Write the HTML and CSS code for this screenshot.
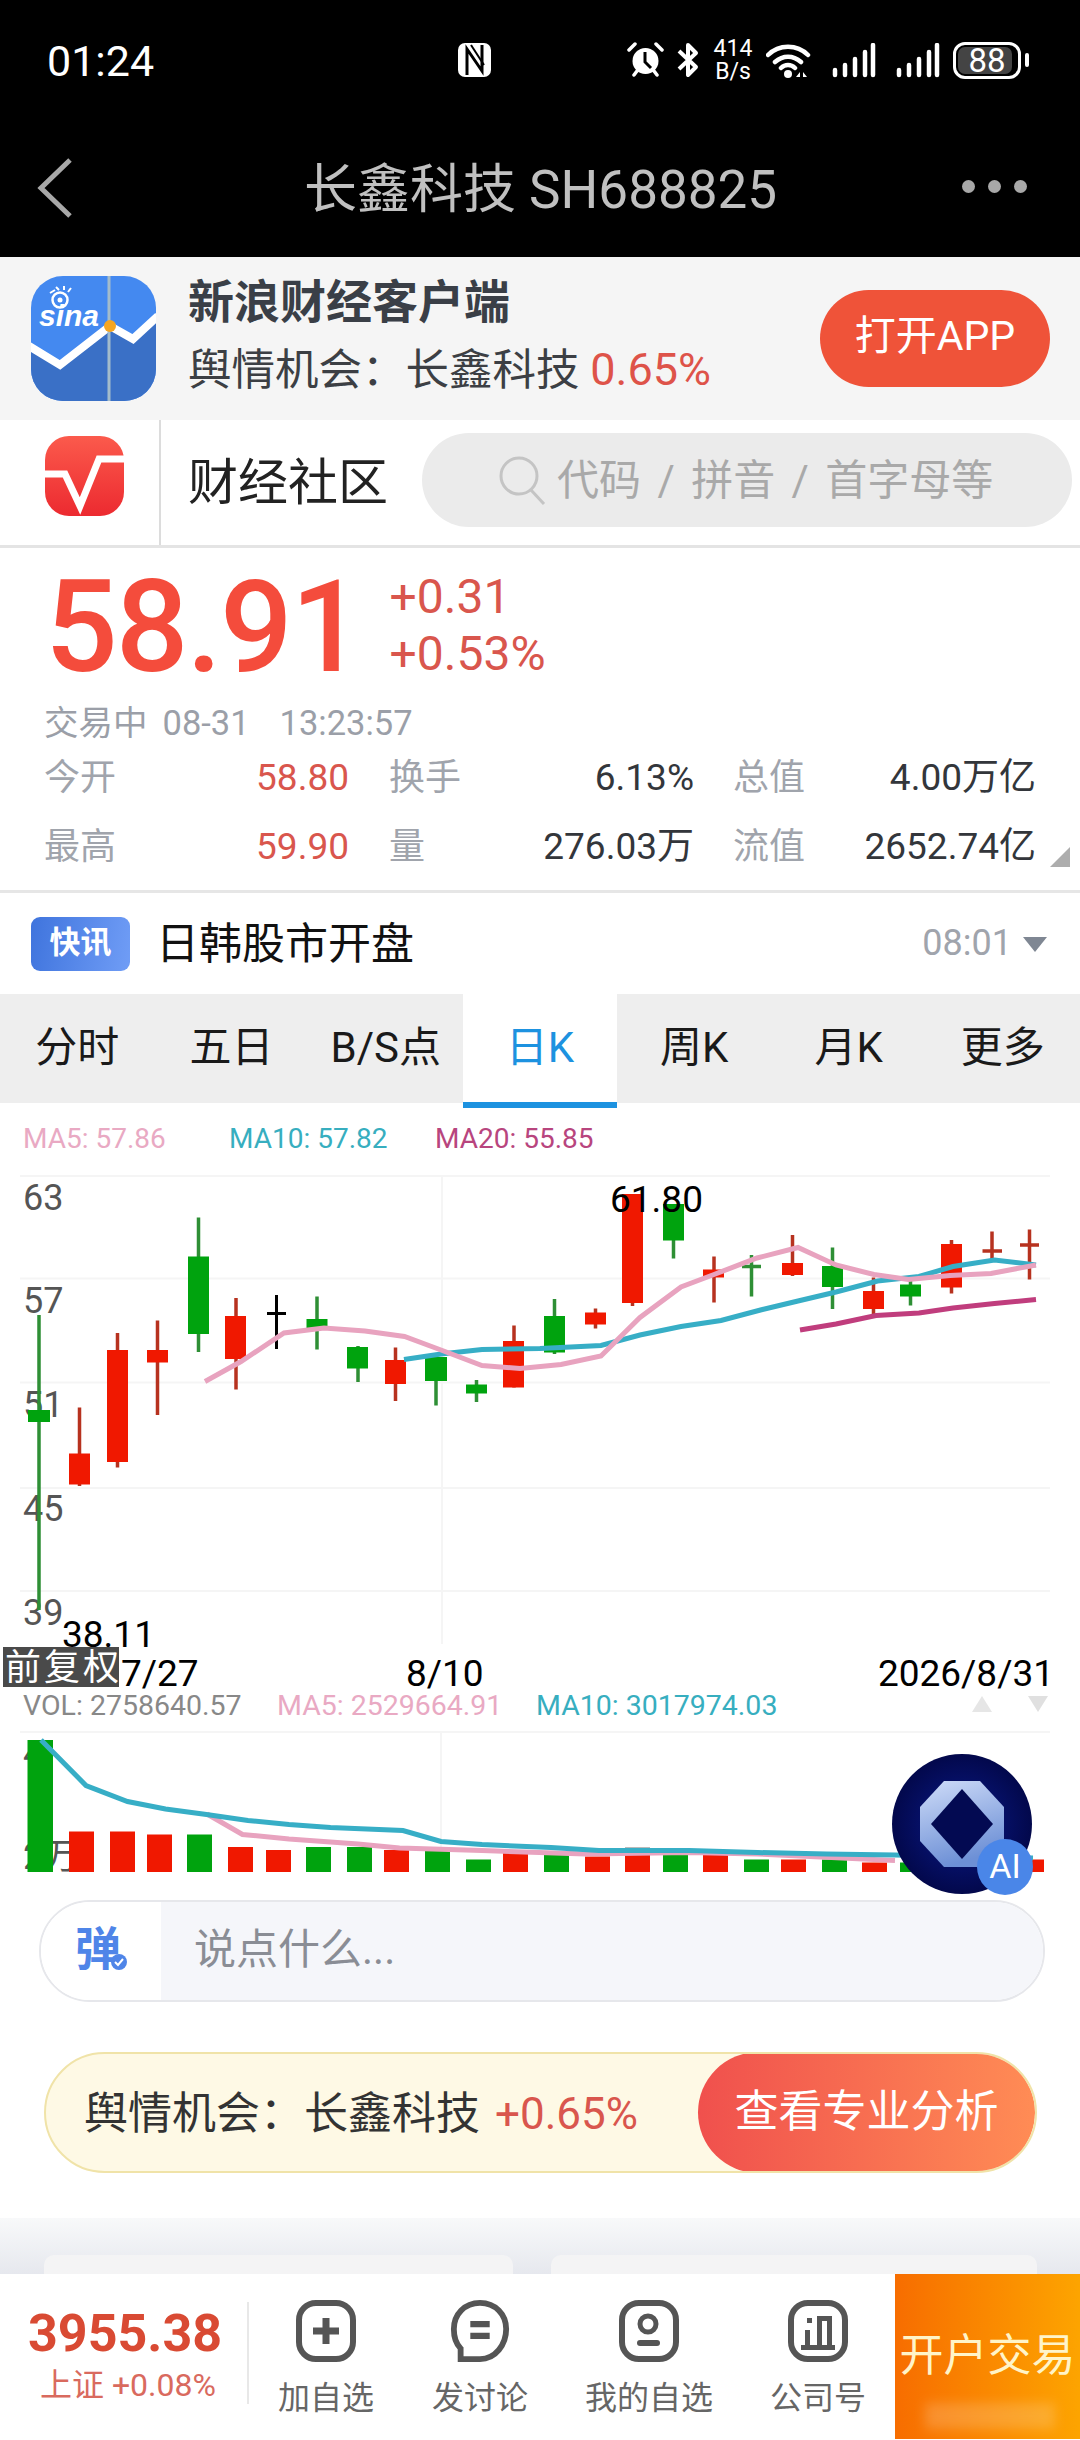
FILE: index.html
```html
<!DOCTYPE html>
<html>
<head>
<meta charset="UTF-8">
<title>长鑫科技 SH688825</title>
<link rel="stylesheet" href="styles.css">
</head>
<body>
<div id="wrap">

 <div class="topbar">
  <div class="status">
   <span class="clock">01:24</span>
   <svg class="ic_nfc" viewBox="0 0 33 34"><rect x="0" y="0" width="33" height="34" rx="7" fill="#fff"/><path d="M9 32V6L24 28V2" stroke="#000" stroke-width="3" fill="none"/><path d="M13 2L26 22" stroke="#000" stroke-width="2"/></svg>
   <div class="status_right">
    <svg class="ic_alarm" viewBox="0 0 37 36"><circle cx="18.500" cy="19" r="13" fill="#fff"/><path d="M18 10V20L24 26" stroke="#000" stroke-width="3" fill="none"/><path d="M2 8L8 2M35 8L29 2M7 33L10 29M30 33L27 29" stroke="#fff" stroke-width="3.500" stroke-linecap="round"/></svg>
    <svg class="ic_bt" viewBox="0 0 22 36"><path d="M2 9L19 25L11 33V3L19 11L2 27" stroke="#fff" stroke-width="4" fill="none" stroke-linejoin="round"/></svg>
    <div class="speed"><span>414</span><span>B/s</span></div>
    <svg class="ic_wifi" viewBox="0 0 46 35"><path d="M2 12C13 1 31 1 42 12M9 19C17 12 27 12 35 19M15 25C19 21 25 21 29 25" stroke="#fff" stroke-width="4.500" fill="none" stroke-linecap="round"/><circle cx="22" cy="31" r="4" fill="#fff"/><path d="M30 34L34 29V34ZM37 29L41 34H37Z" fill="#fff"/></svg>
    <svg class="ic_signal" viewBox="0 0 44 35"><path d="M3 27V32M13 22V32M23 16V32M33 9V32M41 2V32" stroke="#fff" stroke-width="4.500" stroke-linecap="round"/></svg>
    <svg class="ic_signal" viewBox="0 0 44 35"><path d="M3 27V32M13 22V32M23 16V32M33 9V32M41 2V32" stroke="#fff" stroke-width="4.500" stroke-linecap="round"/></svg>
    <div class="battery"><div class="battery_fill"></div><span>88</span></div>
    <div class="battery_tip"></div>
   </div>
  </div>
  <div class="nav">
   <svg class="ic_back" viewBox="0 0 36 60"><path d="M33 2L4 30L33 58" stroke="#a8a8a8" stroke-width="5" fill="none"/></svg>
   <div class="nav_title">长鑫科技 SH688825</div>
   <div class="nav_dots"><i></i><i></i><i></i></div>
  </div>
 </div>

 <div class="banner">
  <svg class="sina_icon" viewBox="0 0 125 125">
   <defs><clipPath id="sinaClip"><rect width="125" height="125" rx="32"/></clipPath></defs>
   <g clip-path="url(#sinaClip)">
    <rect width="125" height="125" fill="#4489f0"/>
    <path d="M0 71L29 89L79 50L102 63L125 41V125H0Z" fill="#3a70c6"/>
    <path d="M-2 70L29 89L79 50L102 63L127 40" stroke="#fff" stroke-width="8" fill="none"/>
    <path d="M78 0V125" stroke="#a3bccb" stroke-width="3"/>
    <circle cx="79" cy="50" r="6" fill="#f5a623"/>
    <circle cx="29" cy="24" r="7.500" fill="none" stroke="#fff" stroke-width="2.500"/>
    <circle cx="29" cy="24" r="2.500" fill="#fff"/>
    <path d="M19 17L24 14M25 11L28 14M33 10L33 14M40 12L37 16" stroke="#fff" stroke-width="2"/>
    <text class="sina_word" x="8" y="50">sina</text>
   </g>
  </svg>
  <div class="banner_text">
   <div class="banner_title">新浪财经客户端</div>
   <div class="banner_sub">舆情机会：长鑫科技 <span class="banner_pct">0.65%</span></div>
  </div>
  <div class="open_btn">打开APP</div>
 </div>

 <div class="search_row">
  <div class="logo_box">
   <svg class="v_logo" viewBox="0 0 79 80">
    <defs><linearGradient id="vGrad" x1="0" y1="0" x2="0" y2="1"><stop offset="0" stop-color="#fb5a4c"/><stop offset="1" stop-color="#ec2a30"/></linearGradient></defs>
    <rect width="79" height="80" rx="24" fill="url(#vGrad)"/>
    <path d="M0 38H20L35 70L54 23H79" stroke="#fff" stroke-width="7" fill="none"/>
   </svg>
  </div>
  <div class="community">财经社区</div>
  <div class="search_box">
   <svg class="ic_search" viewBox="0 0 48 50"><circle cx="21" cy="21" r="18" fill="none" stroke="#c4c4c4" stroke-width="3"/><path d="M33 35L46 49" stroke="#c4c4c4" stroke-width="3"/></svg>
   <span>代码 / 拼音 / 首字母等</span>
  </div>
 </div>

 <div class="quote">
  <div class="price_line">
   <div class="price">58.91</div>
   <div class="change">
    <div>+0.31</div>
    <div>+0.53%</div>
   </div>
  </div>
  <div class="trade_time"><span>交易中</span><span class="t_date">08-31</span><span class="t_clock">13:23:57</span></div>
  <div class="stats">
   <span class="lbl">今开</span><span class="val red_soft">58.80</span>
   <span class="lbl mid">换手</span><span class="val">6.13%</span>
   <span class="lbl last">总值</span><span class="val">4.00万亿</span>
   <span class="lbl">最高</span><span class="val red_soft">59.90</span>
   <span class="lbl mid">量</span><span class="val">276.03万</span>
   <span class="lbl last">流值</span><span class="val">2652.74亿</span>
  </div>
  <div class="corner"></div>
 </div>

 <div class="flash">
  <div class="flash_tag">快讯</div>
  <div class="flash_text">日韩股市开盘</div>
  <div class="flash_time">08:01</div>
  <div class="flash_arrow"></div>
 </div>

 <div class="tabs">
  <div class="tab">分时</div>
  <div class="tab">五日</div>
  <div class="tab">B/S点</div>
  <div class="tab active">日K</div>
  <div class="tab">周K</div>
  <div class="tab">月K</div>
  <div class="tab">更多</div>
 </div>

 <div class="chart_wrap">
  <svg class="chart" viewBox="0 1104 1080 797">
   <text class="legend pink" x="23" y="1149">MA5: 57.86</text>
   <text class="legend teal" x="229" y="1149">MA10: 57.82</text>
   <text class="legend rose" x="435" y="1149">MA20: 55.85</text>

   <path class="grid" d="M20 1177H1050M20 1279.500H1050M20 1383.500H1050M20 1489H1050M20 1592H1050M442 1177V1645"/>

   <text class="axis" x="23" y="1211">63</text>
   <text class="axis" x="23" y="1314">57</text>
   <text class="axis" x="23" y="1418">51</text>
   <text class="axis" x="23" y="1522">45</text>
   <text class="axis" x="23" y="1626">39</text>

   <!-- wicks -->
   <path class="wick_red" d="M79.500 1408.500V1487M117.500 1334V1468.500M157.500 1321.500V1416M236 1299V1390.500M395.500 1348.500V1402M514 1326.500V1388.500M595.500 1309.500V1329.500M632.500 1195V1307M714 1257.500V1303.500M792.500 1236V1277M873.500 1278.500V1316.500M951.500 1241V1294.500M992 1232.500V1261M982.500 1252H1002M1029.500 1230.500V1280.500M1020 1246H1039"/>
   <path class="wick_green" d="M39 1316V1611M198.500 1218.500V1353M317 1297.500V1350.500M358 1347V1383M436 1355V1406.500M476.500 1381V1403M554.500 1300V1355M673.500 1205V1259.500M751.500 1256V1297.500M742 1267.500H761M832.500 1248.500V1310M910.500 1282V1306.500"/>
   <path class="wick_black" d="M276.500 1296V1350M267 1314.500H286"/>

   <g class="body_red">
    <rect x="69" y="1454.500" width="21" height="31"/>
    <rect x="107" y="1351" width="21" height="112"/>
    <rect x="147" y="1351" width="21" height="12.500"/>
    <rect x="225" y="1317" width="21" height="43"/>
    <rect x="385" y="1361" width="21" height="24"/>
    <rect x="503" y="1342" width="21" height="46.500"/>
    <rect x="585" y="1313.500" width="21" height="12"/>
    <rect x="622" y="1195" width="21" height="109"/>
    <rect x="703" y="1270.500" width="21" height="8"/>
    <rect x="782" y="1264" width="21" height="12"/>
    <rect x="863" y="1292" width="21" height="18"/>
    <rect x="941" y="1245" width="21" height="43.500"/>
   </g>
   <g class="body_green">
    <rect x="28" y="1411" width="22" height="12"/>
    <rect x="188" y="1257.500" width="21" height="77.500"/>
    <rect x="306.500" y="1320" width="21" height="9"/>
    <rect x="347" y="1348" width="21" height="21.500"/>
    <rect x="425" y="1358" width="22" height="24"/>
    <rect x="466" y="1385.500" width="21" height="9"/>
    <rect x="544" y="1317" width="21" height="36.500"/>
    <rect x="663" y="1205" width="21" height="36.500"/>
    <rect x="822" y="1267" width="21" height="21"/>
    <rect x="900" y="1285.500" width="21" height="12"/>
   </g>

   <polyline class="line_rose" points="800,1331 836,1325 876,1316.500 919,1314 953,1309 994.500,1304.500 1036,1300.500"/>
   <polyline class="line_teal" points="404,1360.500 441,1355 482,1350.500 540,1349.500 601,1346.500 640,1336 681,1327.500 721,1321.500 760.500,1311 798,1302 836,1293 877.500,1282 919,1277.500 953,1267.500 994.500,1261 1036,1266"/>
   <polyline class="line_pink" points="205,1382.500 241,1362.500 284,1334 324,1329 365,1332 404.500,1337.500 441,1351 482,1366.500 520,1369.500 561,1365.500 601,1357 640,1318.500 681,1288 714,1275.500 757,1259 798,1248.500 836,1266 874,1275.500 908.500,1280.500 950,1276.500 991,1274.500 1036,1266"/>

   <text class="mark" x="610" y="1213">61.80</text>
   <text class="mark" x="62" y="1648">38.11</text>
   <text class="mark" x="121" y="1687">7/27</text>
   <text class="mark" x="406" y="1687">8/10</text>
   <text class="mark end" x="1054" y="1687">2026/8/31</text>

   <rect class="fq_box" x="3" y="1648" width="116" height="40"/>
   <text class="fq_text" x="5" y="1681">前复权</text>

   <text class="legend vol gray" x="23" y="1716">VOL: 2758640.57</text>
   <text class="legend vol pink" x="277" y="1716">MA5: 2529664.91</text>
   <text class="legend vol teal" x="536" y="1716">MA10: 3017974.03</text>
   <path class="tri_up" d="M982 1697L992 1713H972Z"/>
   <path class="tri_down" d="M1028 1697H1048L1038 1713Z"/>

   <path class="grid" d="M20 1733H1050M441 1733V1873"/>
   <text class="axis" x="23" y="1767">4</text>
   <text class="axis" x="23" y="1870">2万</text>

   <g class="body_green">
    <rect x="27.500" y="1741" width="25.500" height="132"/>
    <rect x="187" y="1835.500" width="25" height="37.500"/>
    <rect x="306" y="1848" width="25" height="25"/>
    <rect x="347" y="1848" width="25" height="25"/>
    <rect x="425" y="1851" width="25" height="22"/>
    <rect x="466" y="1860.500" width="25" height="12.500"/>
    <rect x="544" y="1854" width="25" height="19"/>
    <rect x="663" y="1854" width="25" height="19"/>
    <rect x="744" y="1860.500" width="25" height="12.500"/>
    <rect x="822" y="1860.500" width="25" height="12.500"/>
    <rect x="900" y="1863.500" width="25" height="9.500"/>
   </g>
   <g class="body_red">
    <rect x="69" y="1832.500" width="25" height="40.500"/>
    <rect x="110" y="1832.500" width="25" height="40.500"/>
    <rect x="147" y="1835.500" width="25" height="37.500"/>
    <rect x="228" y="1848" width="25" height="25"/>
    <rect x="266" y="1851" width="25" height="22"/>
    <rect x="384" y="1851" width="25" height="22"/>
    <rect x="503" y="1854" width="25" height="19"/>
    <rect x="585" y="1857.500" width="25" height="15.500"/>
    <rect x="625" y="1854" width="25" height="19"/>
    <rect x="703" y="1854" width="25" height="19"/>
    <rect x="781" y="1860.500" width="25" height="12.500"/>
    <rect x="862" y="1863.500" width="25" height="9.500"/>
    <rect x="1019" y="1860.500" width="25" height="12.500"/>
   </g>
   <rect class="vol_cap" x="625" y="1848.500" width="25" height="5.500"/>

   <polyline class="line_pink" points="207,1815 242.500,1835.500 289,1840 358,1845 399.500,1849 482,1851.500 585.500,1855 689,1853.500 757.500,1855 895,1861.500"/>
   <polyline class="line_teal" points="41,1741 86,1786.500 127.500,1802.500 165.500,1810 206.500,1815.500 248,1821.500 289,1825.500 330.500,1828.500 403,1831.500 441,1842.500 482,1845.500 551,1848.500 599,1851.500 689,1851.500 757.500,1853.500 826.500,1855 895,1856 1033,1859"/>
  </svg>

  <div class="ai_float">
   <svg class="ai_gem" viewBox="0 0 84 86">
    <defs><linearGradient id="gemGrad" x1="0" y1="0" x2="0.300" y2="1"><stop offset="0" stop-color="#cfdcf8"/><stop offset="1" stop-color="#6d90d6"/></linearGradient></defs>
    <path d="M24 0H60L84 26V60L60 86H24L0 60V26Z" fill="url(#gemGrad)"/>
    <path d="M42 8L73 43L42 78L11 43Z" fill="#030a52"/>
   </svg>
   <div class="ai_badge">AI</div>
  </div>
 </div>

 <div class="comment">
  <div class="comment_left">
   <span class="dan">弹</span>
   <svg class="dan_check" viewBox="0 0 16 16"><circle cx="8" cy="8" r="8" fill="#4f85e8"/><path d="M4 8L7 11L12 5" stroke="#fff" stroke-width="2" fill="none"/></svg>
  </div>
  <div class="comment_input">说点什么...</div>
 </div>

 <div class="promo">
  <div class="promo_text">舆情机会：长鑫科技<span class="promo_pct">+0.65%</span></div>
  <div class="promo_btn">查看专业分析</div>
 </div>

 <div class="feed">
  <div class="feed_card one"></div>
  <div class="feed_card two"></div>
 </div>

 <div class="footer">
  <div class="index_box">
   <div class="index_num">3955.38</div>
   <div class="index_chg">上证 +0.08%</div>
  </div>
  <div class="foot_item one">
   <svg class="foot_icon" viewBox="0 0 60 62"><rect x="3" y="3" width="54" height="56" rx="17" fill="none" stroke="#555" stroke-width="6"/><path d="M30 18V44M17 31H43" stroke="#555" stroke-width="7"/></svg>
   <span>加自选</span>
  </div>
  <div class="foot_item two">
   <svg class="foot_icon" viewBox="0 0 60 64"><path d="M30 3C14 3 3 15 3 30C3 39 6 46 10 50V61H30C46 61 57 46 57 30C57 15 46 3 30 3Z" fill="none" stroke="#555" stroke-width="6"/><path d="M20 25H40M20 37H40" stroke="#555" stroke-width="6.500"/></svg>
   <span>发讨论</span>
  </div>
  <div class="foot_item three">
   <svg class="foot_icon" viewBox="0 0 60 62"><rect x="3" y="3" width="54" height="56" rx="17" fill="none" stroke="#555" stroke-width="6"/><circle cx="29" cy="24" r="8" fill="none" stroke="#555" stroke-width="5"/><path d="M21 43H38" stroke="#555" stroke-width="6" stroke-linecap="round"/></svg>
   <span>我的自选</span>
  </div>
  <div class="foot_item four">
   <svg class="foot_icon" viewBox="0 0 60 62"><rect x="3" y="3" width="54" height="56" rx="17" fill="none" stroke="#555" stroke-width="6"/><path d="M13 45H47V50H13ZM17 30H22V45H17ZM19 18H24V23H19ZM29 16H34V45H29ZM39 16H44V45H39ZM29 16H44V21H29Z" fill="#555"/></svg>
   <span>公司号</span>
  </div>
  <div class="open_acct">开户交易<div class="smudge"></div></div>
 </div>

</div>
</body>
</html>
```

FILE: styles.css
```css
* {
 box-sizing: border-box;
}

html, body {
 margin: 0;
 padding: 0;
}

body {
 font-family: Roboto, "Noto Sans CJK SC", sans-serif;
 background-color: #fff;
}

#wrap {
 position: relative;
 width: 1080px;
 height: 2440px;
 overflow: hidden;
}

/* top black area */
.topbar {
 height: 257px;
 background-color: #000;
}

.status {
 position: relative;
 height: 120px;
 display: flex;
 align-items: center;
 padding-left: 47px;
 color: #fff;
}

.clock {
 font-size: 43px;
 width: 411px;
 line-height: 50px;
 margin-top: 2px;
}

.ic_nfc {
 width: 33px;
 height: 34px;
}

.status_right {
 display: flex;
 align-items: center;
 margin-left: 136px;
}

.ic_alarm {
 width: 37px;
 height: 36px;
}

.ic_bt {
 width: 22px;
 height: 36px;
 margin-left: 13px;
}

.speed {
 display: flex;
 flex-direction: column;
 align-items: center;
 width: 40px;
 margin-left: 14px;
 font-size: 23px;
 line-height: 23px;
}

.ic_wifi {
 width: 46px;
 height: 35px;
 margin-left: 13px;
}

.ic_signal {
 width: 44px;
 height: 35px;
 margin-left: 20px;
}

.battery {
 position: relative;
 width: 68px;
 height: 37px;
 margin-left: 13px;
 border: 3px solid #fff;
 border-radius: 12px;
 overflow: hidden;
 text-align: center;
 font-size: 33px;
 line-height: 31px;
}

.battery span {
 position: relative;
}

.battery_fill {
 position: absolute;
 left: 2px;
 top: 2px;
 bottom: 2px;
 width: 54px;
 border-radius: 7px;
 background-color: #444;
}

.battery_tip {
 width: 4px;
 height: 14px;
 margin-left: 4px;
 border-radius: 2px;
 background-color: #fff;
}

.nav {
 position: relative;
 height: 137px;
 display: flex;
 align-items: center;
 justify-content: center;
}

.ic_back {
 position: absolute;
 left: 37px;
 top: 38px;
 width: 36px;
 height: 60px;
}

.nav_title {
 font-size: 53px;
 line-height: 64px;
 color: #c0c0c0;
 margin-top: 2px;
 margin-left: 1px;
}

.nav_dots {
 position: absolute;
 right: 53px;
 top: 60px;
 display: flex;
 gap: 13px;
}

.nav_dots i {
 width: 13px;
 height: 13px;
 border-radius: 50%;
 background-color: #a8a8a8;
}

/* app banner */
.banner {
 position: relative;
 height: 163px;
 display: flex;
 align-items: center;
 padding-left: 31px;
 background-color: #f5f5f5;
}

.sina_icon {
 width: 125px;
 height: 125px;
}

.sina_word {
 font-family: "Liberation Sans", sans-serif;
 font-style: italic;
 font-weight: bold;
 font-size: 30px;
 fill: #fff;
}

.banner_text {
 margin-left: 32px;
 margin-top: -7px;
}

.banner_title {
 font-size: 46px;
 font-weight: 700;
 line-height: 62px;
 color: #3a3f47;
}

.banner_sub {
 font-size: 43.500px;
 line-height: 56px;
 margin-top: 9px;
 color: #3c3f44;
}

.banner_pct {
 font-size: 45px;
 color: #de5349;
}

.red_soft {
 color: #de5349;
}

.open_btn {
 position: absolute;
 left: 820px;
 top: 33px;
 width: 230px;
 height: 97px;
 border-radius: 49px;
 background-color: #ef5339;
 color: #fff;
 font-size: 41px;
 line-height: 93px;
 text-align: center;
}

/* search row */
.search_row {
 display: flex;
 align-items: center;
 height: 128px;
 border-bottom: 3px solid #e4e4e4;
}

.logo_box {
 display: flex;
 align-items: center;
 justify-content: center;
 width: 161px;
 height: 100%;
 padding-left: 9px;
 padding-bottom: 14px;
 border-right: 2px solid #dcdcdc;
}

.v_logo {
 width: 79px;
 height: 80px;
}

.community {
 margin-left: 27px;
 font-size: 50px;
 line-height: 60px;
 color: #222;
}

.search_box {
 display: flex;
 align-items: center;
 gap: 11px;
 width: 650px;
 height: 94px;
 margin-left: 34px;
 margin-bottom: 6px;
 padding-left: 76px;
 border-radius: 47px;
 background-color: #ebebeb;
 color: #a9a9a9;
 font-size: 42px;
 word-spacing: 6px;
}

.search_box span {
 margin-top: -6px;
}

.ic_search {
 width: 48px;
 height: 50px;
}

/* quote block */
.quote {
 position: relative;
 height: 345px;
 padding-left: 44px;
 border-bottom: 3px solid #e6e6e6;
}

.price_line {
 display: flex;
 height: 135px;
}

.price {
 font-size: 128px;
 font-weight: 500;
 line-height: 135px;
 padding-top: 12px;
 margin-left: 1px;
 letter-spacing: -2px;
 color: #f44c3c;
}

.change {
 margin-left: 28px;
 margin-top: 20px;
 font-size: 48px;
 line-height: 57px;
 color: #d9564d;
}

.trade_time {
 display: flex;
 margin-top: 20px;
 font-size: 34.500px;
 line-height: 40px;
 color: #9b9fa8;
}

.t_date {
 margin-left: 15px;
}

.t_clock {
 margin-left: 30px;
}

.stats {
 display: grid;
 grid-template-columns: 80px 225px 120px 225px 119px 223px;
 grid-auto-rows: 69px;
 width: 992px;
 align-items: center;
 font-size: 37px;
 line-height: 44px;
 white-space: nowrap;
}

.lbl {
 font-size: 36px;
 color: #a0a4ac;
}

.lbl.mid {
 padding-left: 40px;
}

.lbl.last {
 padding-left: 39px;
}

.val {
 text-align: right;
 color: #33363b;
}

.val.red_soft {
 color: #d9564d;
}

.corner {
 position: absolute;
 right: 10px;
 top: 299px;
 width: 0;
 height: 0;
 border-left: 20px solid transparent;
 border-bottom: 20px solid #adadad;
}

/* flash news */
.flash {
 position: relative;
 height: 101px;
 display: flex;
 align-items: center;
 padding-left: 31px;
}

.flash_tag {
 width: 99px;
 height: 54px;
 border-radius: 9px;
 background: linear-gradient(100deg, #3f74dd, #709df6);
 color: #fff;
 font-size: 31px;
 font-weight: 700;
 line-height: 52px;
 text-align: center;
}

.flash_text {
 margin-left: 26px;
 font-size: 43px;
 line-height: 56px;
 color: #111;
}

.flash_time {
 position: absolute;
 right: 68px;
 top: 27px;
 font-size: 36px;
 line-height: 46px;
 color: #a0a4ac;
}

.flash_arrow {
 position: absolute;
 right: 33px;
 top: 44px;
 border-left: 12px solid transparent;
 border-right: 12px solid transparent;
 border-top: 15px solid #7f8793;
}

/* period tabs */
.tabs {
 display: grid;
 grid-template-columns: repeat(7, 1fr);
 height: 109px;
 background-color: #eee;
}

.tab {
 font-size: 42px;
 line-height: 108px;
 text-align: center;
 color: #1a1a1a;
}

.tab.active {
 background-color: #fff;
 border-bottom: 6px solid #1d92e0;
 color: #1d92e0;
}

/* chart canvas */
.chart_wrap {
 position: relative;
 height: 797px;
}

.chart {
 display: block;
 width: 1080px;
 height: 797px;
}

.legend {
 font-size: 28px;
}

.legend.vol {
 font-size: 28.500px;
}

.pink { fill: #e9a9c3; }
.teal { fill: #37aebf; }
.rose { fill: #b8457e; }
.gray { fill: #888; }

.grid {
 stroke: #f5f5f5;
 stroke-width: 2;
 fill: none;
}

.axis {
 font-size: 36px;
 fill: #555;
}

.mark {
 font-size: 37px;
 fill: #000;
}

.end {
 text-anchor: end;
}

.wick_red {
 stroke: #b7321f;
 stroke-width: 3.500;
 fill: none;
}

.wick_green {
 stroke: #2e8f35;
 stroke-width: 3.500;
 fill: none;
}

.wick_black {
 stroke: #000;
 stroke-width: 3;
 fill: none;
}

.body_red { fill: #f01800; }
.body_green { fill: #00a30e; }

.vol_cap { fill: #777; }

.line_pink, .line_teal, .line_rose {
 fill: none;
 stroke-width: 5;
}

.line_pink { stroke: #e8a3bf; }
.line_teal { stroke: #37aec6; }
.line_rose { stroke: #c03d7d; }

.fq_box { fill: #4a4a4a; }

.fq_text {
 font-size: 36px;
 letter-spacing: 3px;
 fill: #fff;
}

.tri_up { fill: #e6e6e6; }
.tri_down { fill: #e0e0e0; }

.ai_float {
 position: absolute;
 left: 892px;
 top: 651px;
 width: 140px;
 height: 140px;
 border-radius: 50%;
 background: radial-gradient(circle at 50% 50%, #0a1a8a, #020748 75%);
 display: flex;
 align-items: center;
 justify-content: center;
}

.ai_gem {
 width: 84px;
 height: 86px;
}

.ai_badge {
 position: absolute;
 right: -1px;
 bottom: -1px;
 width: 56px;
 height: 56px;
 border-radius: 50%;
 background-color: #4a86e8;
 color: #fff;
 font-size: 34px;
 line-height: 55px;
 text-align: center;
}

/* comment input */
.comment {
 display: flex;
 width: 1006px;
 height: 102px;
 margin-left: 39px;
 border: 2px solid #e6e7eb;
 border-radius: 51px;
 overflow: hidden;
}

.comment_left {
 position: relative;
 width: 120px;
 padding-left: 34px;
 background-color: #fff;
 color: #4f85e8;
}

.dan {
 font-size: 46px;
 font-weight: 700;
 line-height: 94px;
}

.dan_check {
 position: absolute;
 left: 70px;
 top: 52px;
 width: 16px;
 height: 16px;
}

.comment_input {
 flex: 1;
 padding-left: 33px;
 background-color: #f5f6fa;
 color: #8a8d95;
 font-size: 42px;
 line-height: 96px;
}

/* promo */
.promo {
 display: flex;
 justify-content: space-between;
 align-items: center;
 width: 993px;
 height: 121px;
 margin: 50px 0 45px 44px;
 padding-left: 38px;
 border: 2px solid #f0e3a8;
 border-radius: 61px;
 background-color: #fef9e5;
 overflow: hidden;
}

.promo_text {
 display: flex;
 align-items: center;
 margin-top: 3px;
 font-size: 44px;
 line-height: 56px;
 color: #333;
}

.promo_pct {
 margin-left: 15px;
 font-size: 44px;
 color: #d9564d;
}

.promo_btn {
 width: 337px;
 height: 121px;
 border-radius: 61px;
 background: linear-gradient(90deg, #f0504d, #ff8c55);
 color: #fff;
 font-size: 44px;
 line-height: 121px;
 text-align: center;
}

/* feed peeking out under footer */
.feed {
 position: relative;
 height: 56px;
 padding: 37px 43px 0 44px;
 display: flex;
 gap: 38px;
 background: linear-gradient(180deg, #f8f9fa, #e6e8ee);
}

.feed_card {
 height: 19px;
 border-radius: 10px 10px 0 0;
 background-color: #f4f4f5;
}

.feed_card.one { width: 469px; }
.feed_card.two { width: 486px; }

/* bottom bar */
.footer {
 position: relative;
 height: 165px;
 background-color: #fff;
}

.index_box {
 position: absolute;
 left: 0;
 top: 28px;
 width: 249px;
 height: 102px;
 padding-left: 28px;
 border-right: 2px solid #e8e8e8;
}

.index_num {
 font-size: 52px;
 font-weight: 700;
 line-height: 56px;
 margin-top: 4px;
 color: #d94a33;
}

.index_chg {
 margin-top: 2px;
 padding-left: 12px;
 font-size: 32px;
 line-height: 42px;
 color: #d96a5e;
}

.foot_item {
 position: absolute;
 top: 26px;
 width: 160px;
 display: flex;
 flex-direction: column;
 align-items: center;
 color: #666;
 font-size: 32px;
 line-height: 40px;
}

.foot_item.one { left: 246px; }
.foot_item.two { left: 400px; }
.foot_item.three { left: 569px; }
.foot_item.four { left: 738px; }

.foot_icon {
 width: 60px;
 height: 62px;
 margin-bottom: 16px;
}

.open_acct {
 position: absolute;
 right: 0;
 top: 0;
 width: 185px;
 height: 165px;
 padding-top: 55px;
 background: linear-gradient(90deg, #f76d00, #fda400);
 color: #fff4c8;
 font-size: 44px;
 line-height: 54px;
 text-align: center;
}

.smudge {
 position: absolute;
 left: 30px;
 bottom: 10px;
 width: 130px;
 height: 26px;
 background-color: rgba(255, 255, 255, 0.18);
 filter: blur(6px);
}
```
